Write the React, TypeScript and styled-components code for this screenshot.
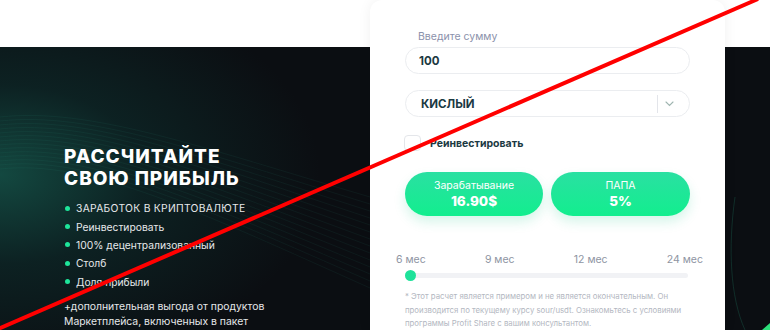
import React from 'react'
import styled, { createGlobalStyle } from 'styled-components'

const GlobalStyle = createGlobalStyle`
	html, body {
		margin: 0;
		padding: 0;
		background: #ffffff;
	}
	* {
		box-sizing: border-box;
	}
`

const Page = styled.div`
	position: relative;
	width: 770px;
	height: 330px;
	overflow: hidden;
	background: #ffffff;
	padding-top: 47px;
	font-family: Inter, "Noto Sans", sans-serif;
`

const Hero = styled.section`
	position: relative;
	height: 283px;
	display: grid;
	grid-template-columns: 370px 355px 1fr;
	background:
		radial-gradient(ellipse 320px 200px at 0% 45%, rgba(22, 92, 80, 0.75) 0%, rgba(14, 52, 50, 0.5) 45%, rgba(11, 15, 19, 0) 100%),
		#0b0e12;
`

const Waves = styled.svg`
	position: absolute;
	left: 0;
	top: 0;
	pointer-events: none;
`

const Intro = styled.div`
	position: relative;
	padding: 99px 0 0 64px;
	color: #ffffff;
`

const Title = styled.h2`
	margin: 0 0 9px;
	font-size: 19px;
	line-height: 22px;
	font-weight: 800;
	letter-spacing: 1px;
	text-transform: uppercase;
`

const Bullets = styled.ul`
	list-style: none;
	margin: 0 0 8px;
	padding: 0;
	display: flex;
	flex-direction: column;
`

const Bullet = styled.li<{ caps?: boolean }>`
	display: flex;
	align-items: center;
	gap: 6px;
	height: 18.4px;
	font-size: 10.3px;
	letter-spacing: ${props => props.caps ? '0.3px' : '0'};
	color: #e6e8ea;
	padding-left: 1px;

	&::before {
		content: '';
		width: 5px;
		height: 5px;
		border-radius: 50%;
		background: #1ee59a;
		flex-shrink: 0;
	}
`

const Extra = styled.p`
	margin: 0;
	font-size: 10.4px;
	line-height: 15px;
	color: #e6e8ea;
`

const Card = styled.div`
	position: relative;
	margin-top: -47px;
	background: #ffffff;
	border-radius: 12px 12px 0 0;
	box-shadow: 0 0 14px rgba(0, 0, 0, 0.06);
	padding: 30px 35px 0;
	display: flex;
	flex-direction: column;
`

const FieldLabel = styled.label`
	font-size: 10.5px;
	line-height: 13px;
	color: #8b91ab;
	padding-left: 13px;
	margin-bottom: 4px;
`

const Pill = styled.div`
	height: 27px;
	border: 1px solid #ebedf0;
	border-radius: 14px;
	display: flex;
	align-items: center;
	padding-left: 13px;
	font-size: 11.5px;
	font-weight: 700;
	color: #1b3942;
`

const Select = styled(Pill)`
	margin-top: 16px;
	padding-left: 15px;
	padding-right: 15px;
`

const SelectValue = styled.span`
	flex: 1;
	text-transform: uppercase;
`

const Divider = styled.span`
	width: 1px;
	height: 18px;
	background: #e3e5ea;
	margin-right: 7px;
`

const CheckRow = styled.div`
	margin-top: 18px;
	display: flex;
	align-items: center;
	gap: 9px;
	font-size: 10.5px;
	font-weight: 700;
	color: #1b3942;
`

const Box = styled.span`
	width: 17px;
	height: 16px;
	border: 1px solid #e4e6ea;
	border-radius: 4px;
	margin-left: -1px;
`

const Results = styled.div`
	margin-top: 21px;
	display: grid;
	grid-template-columns: 138px 139px;
	gap: 8px;
`

const Result = styled.div`
	height: 44px;
	border-radius: 22px;
	background: linear-gradient(180deg, #2ae0a2 0%, #12ee8e 100%);
	box-shadow: 0 6px 12px rgba(25, 200, 140, 0.18);
	color: #ffffff;
	display: flex;
	flex-direction: column;
	align-items: center;
	justify-content: center;
`

const ResultLabel = styled.span`
	font-size: 10.5px;
	line-height: 14px;
`

const ResultValue = styled.span`
	font-size: 13.5px;
	line-height: 17px;
	font-weight: 800;
`

const Periods = styled.div`
	margin: 37px -13px 0 -9px;
	display: flex;
	justify-content: space-between;
	font-size: 10.5px;
	line-height: 13px;
	color: #8e94a2;
`

const Track = styled.div`
	position: relative;
	margin: 7px 2px 0 0;
	height: 5px;
	border-radius: 3px;
	background: #f1f2f5;
`

const Thumb = styled.span`
	position: absolute;
	left: 0;
	top: -3px;
	width: 11px;
	height: 11px;
	border-radius: 50%;
	background: #1ee29a;
`

const Note = styled.p`
	margin: 12px 0 0;
	font-size: 7.8px;
	line-height: 13.5px;
	color: #b3b7c1;
`

const Aside = styled.div`
	position: relative;
`

const Strike = styled.svg`
	position: absolute;
	left: 0;
	top: 0;
	pointer-events: none;
`

const benefits = ['ЗАРАБОТОК В КРИПТОВАЛЮТЕ', 'Реинвестировать', '100% децентрализованный', 'Столб', 'Доля прибыли']

export default function App() {
	return <Page>
		<GlobalStyle/>
		<Hero>
			<Waves width="770" height="283" viewBox="0 0 770 283">
				{Array.from({ length: 14 }).map((_, i) => <path key={i}
					d={`M0 ${70 + i * 4} C 90 ${60 + i * 4}, 200 ${100 + i * 5}, 370 ${150 + i * 7}`}
					stroke="#2fa88c" strokeOpacity={0.08} strokeWidth="1" fill="none"/>)}
				<path d="M735 150 C 728 200, 730 250, 745 283" stroke="#1d6b55" strokeOpacity="0.35" strokeWidth="1" fill="none"/>
				<path d="M762 283 L770 276 L770 283 Z" fill="#2de07a"/>
			</Waves>
			<Intro>
				<Title>Рассчитайте<br/>свою прибыль</Title>
				<Bullets>
					{benefits.map((b, i) => <Bullet key={b} caps={i == 0}>{b}</Bullet>)}
				</Bullets>
				<Extra>+дополнительная выгода от продуктов<br/>Маркетплейса, включенных в пакет</Extra>
			</Intro>
			<Card>
				<FieldLabel>Введите сумму</FieldLabel>
				<Pill>100</Pill>
				<Select>
					<SelectValue>кислый</SelectValue>
					<Divider/>
					<svg width="9" height="6" viewBox="0 0 9 6">
						<path d="M1 1 L4.5 4.5 L8 1" stroke="#9fb5b0" strokeWidth="1.1" fill="none" strokeLinecap="round"/>
					</svg>
				</Select>
				<CheckRow>
					<Box/>
					Реинвестировать
				</CheckRow>
				<Results>
					<Result>
						<ResultLabel>Зарабатывание</ResultLabel>
						<ResultValue>16.90$</ResultValue>
					</Result>
					<Result>
						<ResultLabel>ПАПА</ResultLabel>
						<ResultValue>5%</ResultValue>
					</Result>
				</Results>
				<Periods>
					<span>6 мес</span>
					<span>9 мес</span>
					<span>12 мес</span>
					<span>24 мес</span>
				</Periods>
				<Track>
					<Thumb/>
				</Track>
				<Note>
					* Этот расчет является примером и не является окончательным. Он производится по текущему курсу sour/usdt. Ознакомьтесь с условиями программы Profit Share с вашим консультантом.
				</Note>
			</Card>
			<Aside/>
		</Hero>
		<Strike width="770" height="330" viewBox="0 0 770 330">
			<line x1="-2" y1="329" x2="758" y2="-1" stroke="#ff0000" strokeWidth="4"/>
		</Strike>
	</Page>
}
